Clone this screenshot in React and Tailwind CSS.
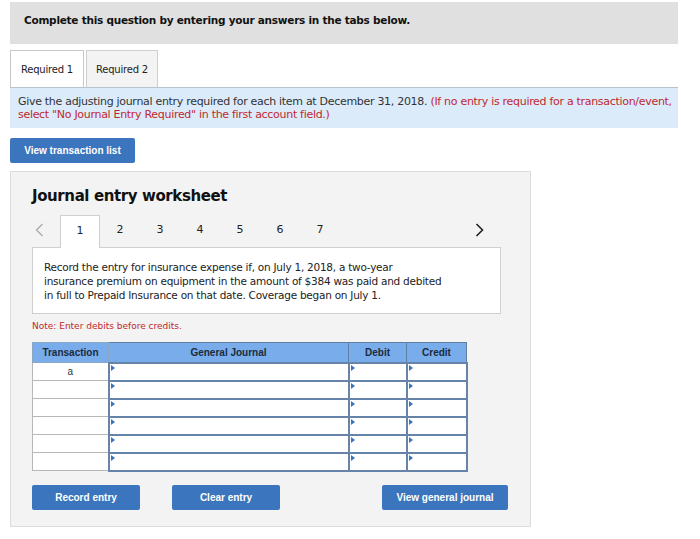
import React from "react";

const verdana = { fontFamily: '"DejaVu Sans", Verdana, sans-serif' };

const Arrow = () => (
  <span className="absolute left-[1px] top-[1px] w-0 h-0 border-y-[3px] border-y-transparent border-l-[4px] border-l-[#3a75bd]" />
);

const JournalTable = () => {
  const rows = ["a", "", "", "", "", ""];
  return (
    <table className="border-collapse text-[10px] font-['Liberation_Sans',Arial,sans-serif]">
      <thead>
        <tr className="bg-[#78acea] h-[20px] text-[#1b2b3f] font-bold">
          <th className="w-[76px] border border-[#8aa6c4] font-bold">Transaction</th>
          <th className="w-[240px] border border-[#5f7ea3] font-bold">General Journal</th>
          <th className="w-[58px] border border-[#5f7ea3] font-bold">Debit</th>
          <th className="w-[60px] border border-[#5f7ea3] font-bold">Credit</th>
        </tr>
      </thead>
      <tbody>
        {rows.map((r, i) => (
          <tr key={i} className="h-[18px]">
            <td className="border border-[#b7b7b7] bg-white text-center text-[#333] align-top pt-[1px]">{r}</td>
            <td className="relative border-2 border-[#6684a8] bg-white"><Arrow /></td>
            <td className="relative border-2 border-[#6684a8] bg-white"><Arrow /></td>
            <td className="relative border-2 border-[#6684a8] bg-white"><Arrow /></td>
          </tr>
        ))}
      </tbody>
    </table>
  );
};

const BlueBtn = ({ children, className }) => (
  <button className={`bg-[#3a75bd] text-white font-bold text-[10px] rounded-[2px] font-['Liberation_Sans',Arial,sans-serif] ${className}`}>
    {children}
  </button>
);

export default function App() {
  return (
    <div className="w-[700px] h-[539px] bg-white pt-[2px] text-[#222]" style={verdana}>
      <div className="mx-[10px] w-[668px] h-[42px] bg-[#e0e0e0] flex items-start pt-[11px] pl-[14px]">
        <span className="text-[10.5px] font-bold text-[#111] tracking-[-0.25px]">Complete this question by entering your answers in the tabs below.</span>
      </div>

      <div className="mx-[10px] mt-[6px] flex items-end h-[37px]">
        <div className="w-[74px] h-[37px] bg-white border border-[#c8c8c8] border-b-0 flex items-center justify-center text-[10px] tracking-[-0.2px] relative z-10">Required 1</div>
        <div className="ml-[2px] w-[72px] h-[37px] bg-[#f3f3f3] border border-[#cfcfcf] border-b-0 flex items-center justify-center text-[10px] tracking-[-0.2px]">Required 2</div>
      </div>
      <div className="mx-[10px] w-[668px] h-[41px] bg-[#dcebfa] border-t border-[#b9c3cc] px-[8px] pt-[7px] text-[11px] leading-[13px] text-[#333] tracking-[-0.3px] whitespace-nowrap">
        Give the adjusting journal entry required for each item at December 31, 2018.{" "}
        <span className="text-[#c0282e]">(If no entry is required for a transaction/event,<br />select "No Journal Entry Required" in the first account field.)</span>
      </div>

      <BlueBtn className="ml-[10px] mt-[10px] w-[125px] h-[25px]">View transaction list</BlueBtn>

      <div className="mx-[10px] mt-[8px] w-[521px] h-[356px] bg-[#f3f3f3] border border-[#dcdcdc] px-[21px]">
        <div className="mt-[13px] text-[15px] font-bold text-[#111] tracking-[-0.4px]">Journal entry worksheet</div>
        <div className="mt-[6px] flex items-end h-[33px]">
          <span className="w-[28px] pl-[3px] self-center">
            <svg width="9" height="14" viewBox="0 0 9 14" fill="none" stroke="#a9a9a9" strokeWidth="1.3">
              <path d="M7.5 1 L1.5 7 L7.5 13" />
            </svg>
          </span>
          <div className="w-[40px] h-[33px] bg-white border border-[#cfcfcf] border-b-0 flex items-center justify-center text-[11px] relative top-[1px] z-10">1</div>
          {[2, 3, 4, 5, 6, 7].map((n) => (
            <div key={n} className="w-[40px] h-[33px] flex items-center justify-center text-[11px]">{n}</div>
          ))}
          <span className="ml-auto mr-[25px] self-center">
            <svg width="9" height="14" viewBox="0 0 9 14" fill="none" stroke="#222" strokeWidth="1.6">
              <path d="M1.5 1 L7.5 7 L1.5 13" />
            </svg>
          </span>
        </div>
        <div className="w-[469px] h-[67px] bg-white border border-[#cfcfcf] px-[11px] pt-[12px] text-[10.5px] leading-[14px] text-[#222] tracking-[-0.25px] whitespace-nowrap">
          Record the entry for insurance expense if, on July 1, 2018, a two-year<br />
          insurance premium on equipment in the amount of $384 was paid and debited<br />
          in full to Prepaid Insurance on that date. Coverage began on July 1.
        </div>
        <div className="mt-[6px] text-[9px] text-[#c0282e]">Note: Enter debits before credits.</div>
        <div className="mt-[9px]">
          <JournalTable />
        </div>
        <div className="mt-[13px] flex">
          <BlueBtn className="w-[108px] h-[25px]">Record entry</BlueBtn>
          <BlueBtn className="ml-[32px] w-[108px] h-[25px]">Clear entry</BlueBtn>
          <BlueBtn className="ml-[102px] w-[126px] h-[25px]">View general journal</BlueBtn>
        </div>
      </div>
    </div>
  );
}
